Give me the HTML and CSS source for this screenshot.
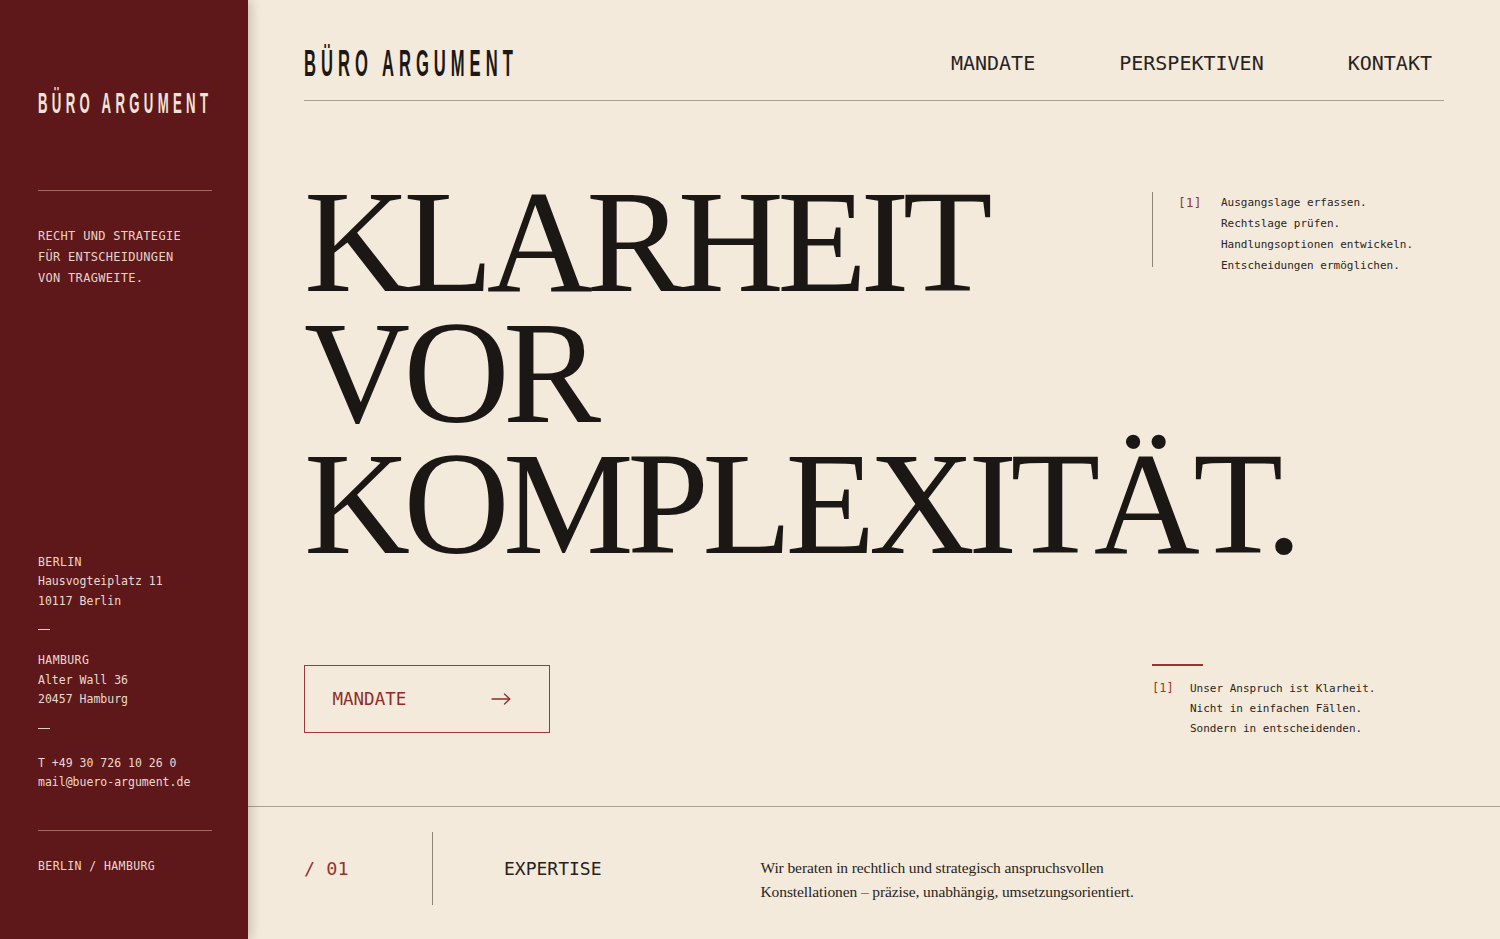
FILE: index.html
```html
<!DOCTYPE html>
<html lang="de">
<head>
<meta charset="utf-8">
<title>Büro Argument</title>
<link rel="stylesheet" href="styles.css">
</head>
<body>
<div class="page">
  <aside class="sidebar">
    <div class="side-logo"><span class="logo-text">BÜRO ARGUMENT</span></div>
    <div class="side-rule side-rule--top"></div>
    <p class="tagline">RECHT UND STRATEGIE<br>FÜR ENTSCHEIDUNGEN<br>VON TRAGWEITE.</p>

    <div class="contact">
      <div class="addr">
        <div class="caps">BERLIN</div>
        <div>Hausvogteiplatz 11</div>
        <div>10117 Berlin</div>
      </div>
      <div class="dash"></div>
      <div class="addr">
        <div class="caps">HAMBURG</div>
        <div>Alter Wall 36</div>
        <div>20457 Hamburg</div>
      </div>
      <div class="dash dash--last"></div>
      <div class="addr">
        <div>T +49 30 726 10 26 0</div>
        <div>mail@buero-argument.de</div>
      </div>
      <div class="side-rule side-rule--bottom"></div>
      <div class="caps side-foot">BERLIN / HAMBURG</div>
    </div>
  </aside>

  <main class="main">
    <header class="topbar">
      <div class="brand"><span class="logo-text">BÜRO ARGUMENT</span></div>
      <nav class="nav">
        <a class="nav-link">MANDATE</a>
        <a class="nav-link">PERSPEKTIVEN</a>
        <a class="nav-link">KONTAKT</a>
      </nav>
    </header>

    <section class="hero">
      <h1 class="headline"><span class="hl-line">KLARHEIT</span><span class="hl-line">VOR</span><span class="hl-line">KOMPLEXITÄT.</span></h1>

      <div class="note note--top">
        <div class="note-bar"></div>
        <span class="note-mark note-mark--lg">[1]</span>
        <p class="note-text">Ausgangslage erfassen.<br>Rechtslage prüfen.<br>Handlungsoptionen entwickeln.<br>Entscheidungen ermöglichen.</p>
      </div>

      <a class="btn">
        <span class="btn-label">MANDATE</span>
        <svg class="btn-arrow" width="20" height="12" viewBox="0 0 20 12" fill="none" stroke="currentColor" stroke-width="1.3" stroke-linecap="round" stroke-linejoin="round">
          <path d="M1 6H18.5"/>
          <path d="M13.5 1L18.8 6L13.5 11"/>
        </svg>
      </a>

      <div class="note note--bottom">
        <div class="note-line"></div>
        <div class="note-row">
          <span class="note-mark">[1]</span>
          <p class="note-text note-text--tight">Unser Anspruch ist Klarheit.<br>Nicht in einfachen Fällen.<br>Sondern in entscheidenden.</p>
        </div>
      </div>
    </section>

    <section class="strip">
      <div class="strip-num">/ 01</div>
      <div class="strip-divider"></div>
      <div class="strip-label">EXPERTISE</div>
      <p class="strip-text">Wir beraten in rechtlich und strategisch anspruchsvollen<br>Konstellationen – präzise, unabhängig, umsetzungsorientiert.</p>
    </section>
  </main>
</div>
</body>
</html>
```

FILE: styles.css
```css
* { box-sizing: border-box; }

html, body {
  margin: 0;
  padding: 0;
}

body {
  background: #f3eadb;
  color: #1e1917;
  font-family: "DejaVu Sans Mono", "Liberation Mono", monospace;
  overflow: hidden;
}

.page {
  display: flex;
  width: 1500px;
  height: 939px;
}

/* ---------- sidebar ---------- */
.sidebar {
  position: relative;
  z-index: 2;
  flex: 0 0 248px;
  width: 248px;
  min-width: 0;
  overflow: hidden;
  height: 939px;
  background: #5e1819;
  color: #ecd8d0;
  padding: 88px 36px 63px 38px;
  display: flex;
  flex-direction: column;
  box-shadow: 3px 0 10px rgba(60, 30, 15, 0.22);
}

.logo-text {
  display: inline-block;
  white-space: nowrap;
  font-family: "Liberation Sans", Arial, sans-serif;
  font-weight: 700;
  transform-origin: 0 50%;
}

.side-logo {
  height: 29px;
  line-height: 1;
}

.side-logo .logo-text {
  font-size: 29.3px;
  letter-spacing: 9.6px;
  transform: scaleX(0.45);
  color: #f1e2da;
}

.side-rule {
  height: 1px;
  background: rgba(225, 170, 160, 0.55);
  width: 174px;
  flex: 0 0 1px;
}

.side-rule--top { margin-top: 73px; }
.side-rule--bottom { margin-top: 37px; }

.tagline {
  margin: 35px 0 0;
  font-size: 12px;
  line-height: 21px;
  letter-spacing: 0.3px;
  color: #e9d2ca;
}

.contact {
  margin-top: auto;
  font-size: 11.5px;
  line-height: 19.5px;
  color: #ecd8d0;
}

.caps { letter-spacing: 0.4px; }

.dash {
  width: 12px;
  height: 1px;
  background: #e6c9c0;
  margin: 18px 0 21px;
}

.dash--last { margin-bottom: 25px; }

.side-foot { margin-top: 26px; }

/* ---------- main ---------- */
.main {
  flex: 1 1 auto;
  min-width: 0;
  display: flex;
  flex-direction: column;
  height: 939px;
}

.topbar {
  margin: 0 56px;
  padding-top: 45px;
  height: 101px;
  border-bottom: 1px solid #aaa091;
  display: flex;
  justify-content: space-between;
  align-items: flex-start;
}

.brand {
  height: 38px;
  line-height: 1;
}

.brand .logo-text {
  font-size: 37.7px;
  letter-spacing: 11.4px;
  transform: scaleX(0.44);
  color: #1d1816;
}

.nav {
  display: flex;
  gap: 84px;
  margin-top: 8px;
  padding-right: 12px;
}

.nav-link {
  font-size: 20px;
  line-height: 20px;
  color: #29231f;
  text-decoration: none;
}

/* ---------- hero ---------- */
.hero {
  flex: 1;
  padding: 75px 56px 73px;
  display: grid;
  grid-template-columns: 848px 292px;
  grid-template-rows: auto 1fr;
}

.headline {
  grid-column: 1;
  grid-row: 1;
  margin: 0;
  white-space: nowrap;
  font-family: "Liberation Serif", "Times New Roman", serif;
  font-weight: 400;
  font-size: 147px;
  line-height: 131px;
  letter-spacing: -0.045em;
  color: #1b1714;
}

.hl-line { display: block; }

.note {
  font-size: 11px;
  color: #2b2521;
}

.note--top {
  grid-column: 2;
  grid-row: 1;
  align-self: start;
  margin-top: 16px;
  display: flex;
  align-items: flex-start;
}

.note-bar {
  width: 1px;
  height: 75px;
  background: #8d8377;
  margin-right: 25px;
}

.note-mark {
  color: #963833;
  font-size: 12px;
  line-height: 20px;
  width: 38px;
  flex: 0 0 38px;
}

.note-mark--lg {
  font-size: 13px;
  line-height: 21px;
  width: 43px;
  flex: 0 0 43px;
}

.note-text {
  margin: 0;
  font-size: 11px;
  line-height: 21px;
}

.note-text--tight { line-height: 20px; }

.note--bottom {
  grid-column: 2;
  grid-row: 2;
  align-self: end;
  margin-bottom: -6px;
}

.note-line {
  width: 51px;
  height: 2px;
  background: #943531;
  margin-bottom: 12px;
}

.note-row {
  display: flex;
  align-items: baseline;
}

.btn {
  grid-column: 1;
  grid-row: 2;
  align-self: end;
  width: 246px;
  height: 68px;
  border: 1.5px solid #9a3b37;
  padding: 0 38px 0 27.5px;
  display: flex;
  align-items: center;
  justify-content: space-between;
  color: #8f2c28;
  text-decoration: none;
}

.btn-label {
  font-size: 17.5px;
  line-height: 20px;
}

.btn-arrow { display: block; }

/* ---------- strip ---------- */
.strip {
  height: 133px;
  border-top: 1px solid #aaa091;
  padding: 25px 56px 34px;
  display: flex;
  align-items: center;
}

.strip-num {
  flex: 0 0 128px;
  font-size: 18.5px;
  color: #963430;
}

.strip-divider {
  flex: 0 0 1px;
  align-self: stretch;
  background: #8d8377;
}

.strip-label {
  flex: 0 0 256.5px;
  margin-left: 71px;
  font-size: 18px;
  color: #27211d;
}

.strip-text {
  margin: 22px 0 0;
  font-family: "Liberation Serif", "Times New Roman", serif;
  font-size: 15.5px;
  line-height: 24px;
  letter-spacing: -0.1px;
  color: #2a2420;
}
```
